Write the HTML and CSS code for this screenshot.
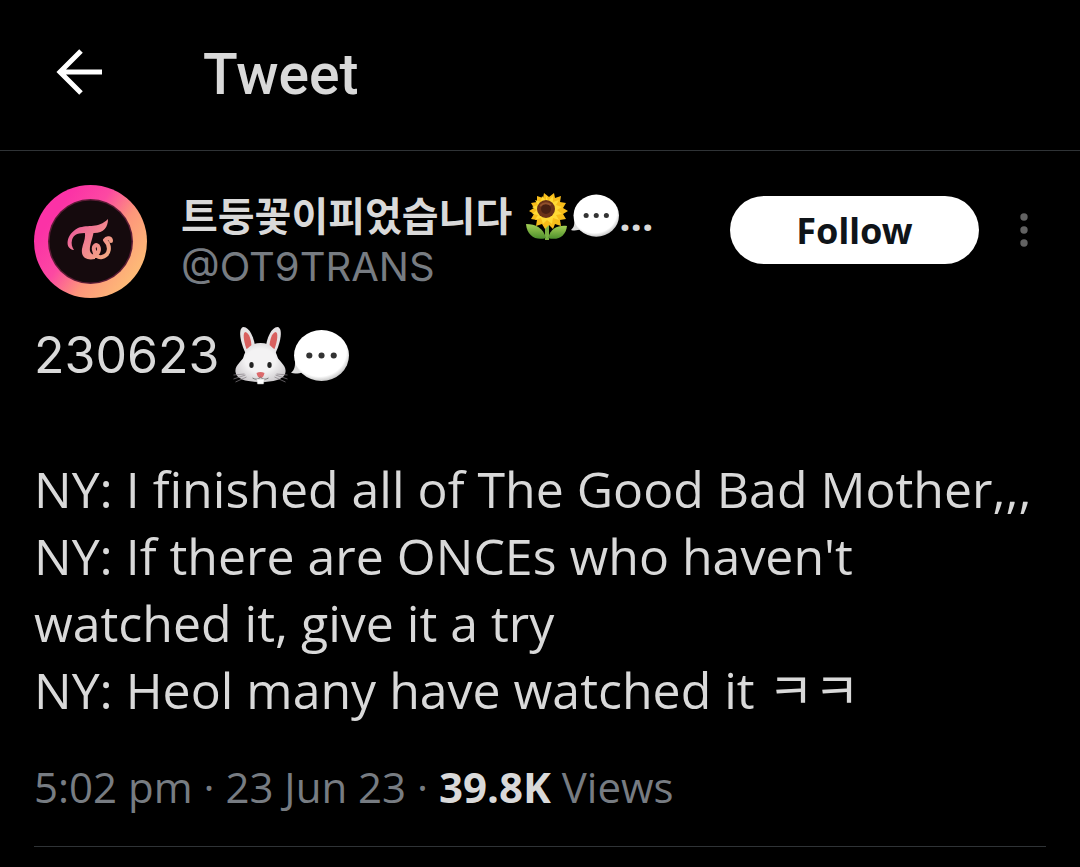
FILE: index.html
```
<!DOCTYPE html>
<html lang="en">
<head>
    <meta charset="UTF-8">
    <meta name="viewport" content="width=device-width, initial-scale=1.0">
    <title>Tweet</title>
    <link rel="stylesheet" href="styles.css">
</head>
<body>
    <!-- Shared emoji drawings -->
    <svg class="sprite" aria-hidden="true">
        <defs>
            <radialGradient id="bubble-fill" cx="0.46" cy="0.42" r="0.57">
                <stop offset="0.86" stop-color="#ffffff"/>
                <stop offset="1" stop-color="#cfcfcf"/>
            </radialGradient>
            <radialGradient id="fur-fill" cx="0.5" cy="0.45" r="0.6">
                <stop offset="0.5" stop-color="#f3f2f3"/>
                <stop offset="1" stop-color="#cbc8cb"/>
            </radialGradient>
            <linearGradient id="leaf-fill" x1="0" y1="0" x2="0" y2="1">
                <stop offset="0" stop-color="#a4cf55"/>
                <stop offset="1" stop-color="#4c8f2c"/>
            </linearGradient>
        </defs>
        <symbol id="bubble" viewBox="0 0 57 57">
            <path d="M0 45c4-3 4-7 4-12l12 13c-5-3-9 1-16-1z" fill="#dedede"/>
            <ellipse cx="30" cy="28" rx="27" ry="25" fill="url(#bubble-fill)"/>
            <circle cx="18" cy="28" r="3" fill="#333"/>
            <circle cx="30" cy="28" r="3" fill="#333"/>
            <circle cx="42" cy="28" r="3" fill="#333"/>
        </symbol>
        <symbol id="rabbit" viewBox="0 0 57 60">
            <path d="M12 27C7 17 4 2 10 1c6 0 11 11 12 22z" fill="#e6e3e5"/>
            <path d="M42 27c5-10 8-25 2-26-6 0-11 11-12 22z" fill="#e6e3e5"/>
            <path d="M13 23C10 15 9 6 12 6c4 1 6 9 6 15z" fill="#d9605f"/>
            <path d="M41 23c3-8 4-17 1-17-4 1-6 9-6 15z" fill="#d9605f"/>
            <path d="M27 17c11 0 15 7 17 14 1 4 9 8 8 15-1 8-13 10-25 10S3 54 2 46c-1-7 7-11 8-15 2-7 6-14 17-14z" fill="url(#fur-fill)"/>
            <ellipse cx="18" cy="39" rx="2.2" ry="3" fill="#222"/>
            <ellipse cx="36" cy="39" rx="2.2" ry="3" fill="#222"/>
            <path d="M0 53l12-4M2 56l11-5M0 49l11-1M54 53l-12-4M52 56l-11-5M54 49l-11-1" stroke="#858085" stroke-width="0.7"/>
            <path d="M23 47q4-2 8 0-1 5-4 5t-4-5z" fill="#dc6a6c"/>
            <path d="M19 52q5 3 8-1 3 4 8 1" fill="none" stroke="#777" stroke-width="1"/>
            <path d="M23 53h8l-1 5h-6z" fill="#fff" stroke="#aaa" stroke-width="0.5"/>
        </symbol>
        <symbol id="sunflower" viewBox="0 0 46 50">
            <path d="M21 34h4v15h-4z" fill="#79b043"/>
            <path d="M22 47C12 50 3 45 2 33c10 0 17 4 20 14z" fill="url(#leaf-fill)"/>
            <path d="M24 47c10 3 18-2 19-12-9-1-16 2-19 12z" fill="url(#leaf-fill)"/>
            <path d="M22 1l3 5 5-4 1 5 6-2-1 6 6 1-3 5 5 3-5 3 3 5-6 1 1 6-6-2-2 5-4-4-4 4-3-5-6 2 1-6-6-1 3-5-5-3 5-3-3-5 6-1V5l6 2 1-5 5 4z" fill="#f7bd1a"/>
            <path d="M22 4l2 6 5-5v6l6-2-3 5 6 2-5 3 5 4-6 1 3 5-6-2-1 6-5-4-4 4-2-6-6 2 3-5-6-1 5-4-5-3 6-2-3-5 6 2 1-6 4 5z" fill="#ffda35"/>
            <circle cx="22" cy="18" r="9" fill="#6a3218"/>
            <circle cx="22" cy="18" r="5" fill="#482012"/>
            <path d="M16 15q5-5 11-1" fill="none" stroke="#91502c" stroke-width="2"/>
        </symbol>
    </svg>

    <header class="top-bar">
        <button class="icon-button" type="button" aria-label="Back">
            <svg class="back-icon" viewBox="0 0 46 46" aria-hidden="true">
                <path d="M46 23H4M25 2L4 23l21 21" fill="none" stroke="#fff" stroke-width="5"/>
            </svg>
        </button>
        <h1>Tweet</h1>
    </header>

    <main class="tweet">
        <div class="author">
            <svg class="avatar" viewBox="0 0 113 113" role="img" aria-label="Profile picture">
                <defs>
                    <linearGradient id="ring" x1="0.1" y1="0.2" x2="0.9" y2="0.75">
                        <stop offset="0.1" stop-color="#fb32a6"/>
                        <stop offset="0.4" stop-color="#fc49a2"/>
                        <stop offset="0.68" stop-color="#fd967b"/>
                        <stop offset="1" stop-color="#fdb877"/>
                    </linearGradient>
                    <linearGradient id="mark" gradientUnits="userSpaceOnUse" x1="36" y1="40" x2="76" y2="74">
                        <stop offset="0" stop-color="#ed589c"/>
                        <stop offset="1" stop-color="#f5b081"/>
                    </linearGradient>
                </defs>
                <circle cx="56.5" cy="56.5" r="56.5" fill="url(#ring)"/>
                <circle cx="56.5" cy="56.5" r="42.5" fill="#5c1c36"/>
                <circle cx="56.5" cy="56.5" r="41" fill="#150a0d"/>
                <!-- Ribbon style monogram -->
                <path d="M40 65C30 64 32 49 44 43c11-4 20 1 30-9 0 8-4 14-14 14-12 0-20-1-22 7-1 4 0 7 2 10z" fill="url(#mark)"/>
                <path d="M50 45h10c-1 8-5 16-4 21 1 3 3 4 5 3v5c-10 2-14-3-13-10 1-6 5-12 2-19z" fill="url(#mark)"/>
                <path d="M59 72c6-3 7-8 5-11-2-2-5 0-4 4 1 5 4 8 8 7 8-2 9-11 3-17 2-3 6-2 6 1" fill="none" stroke="url(#mark)" stroke-width="4" stroke-linecap="round" stroke-linejoin="round"/>
            </svg>
            <div class="names">
                <h2><span>트둥꽃이피었습니다</span><svg class="emoji-small flower" role="img" aria-label="sunflower"><use href="#sunflower"/></svg><svg class="emoji-small" role="img" aria-label="speech balloon"><use href="#bubble"/></svg><span>...</span></h2>
                <a class="handle" href="#">@OT9TRANS</a>
            </div>
            <button class="follow" type="button">Follow</button>
            <button class="icon-button more" type="button" aria-label="More options">
                <svg class="more-icon" viewBox="0 0 8 34" fill="#626262" aria-hidden="true">
                    <circle cx="4" cy="4" r="3.7"/>
                    <circle cx="4" cy="17" r="3.7"/>
                    <circle cx="4" cy="30" r="3.7"/>
                </svg>
            </button>
        </div>

        <div class="tweet-text">
            <p class="date-line">230623 <svg class="emoji" role="img" aria-label="rabbit"><use href="#rabbit"/></svg><svg class="emoji" role="img" aria-label="speech balloon"><use href="#bubble"/></svg></p>
            <p>NY: I finished all of The Good Bad Mother,,,</p>
            <p>NY: If there are ONCEs who haven't<br>watched it, give it a try</p>
            <p>NY: Heol many have watched it ㅋㅋ</p>
        </div>

        <p class="meta">5:02 pm · 23 Jun 23 · <strong>39.8K</strong> Views</p>
    </main>
</body>
</html>
```
FILE: styles.css
```
/* Basic reset */
* {
    margin: 0;
    padding: 0;
    box-sizing: border-box;
}

body {
    background-color: #000;
    color: #d9d9d9;
    font-family: "Open Sans", "Noto Sans CJK KR", sans-serif;
}

.sprite {
    position: absolute;
    width: 0;
    height: 0;
}

/* Title bar */
.top-bar {
    display: flex;
    align-items: center;
    gap: 101px;
    height: 151px;
    padding: 0 56px 6px;
    border-bottom: 1px solid #2f3336;
}

.top-bar h1 {
    padding-top: 6px;
    font-family: Roboto, sans-serif;
    font-size: 57px;
    font-weight: 500;
    line-height: 68px;
}

.icon-button {
    display: flex;
    background: none;
    border: none;
    cursor: pointer;
}

.back-icon {
    width: 46px;
    height: 46px;
}

/* Tweet */
.tweet {
    margin: 0 34px;
    padding-top: 34px;
    border-bottom: 1px solid #2f3336;
}

.author {
    display: flex;
    align-items: flex-start;
}

.avatar {
    flex: none;
    width: 113px;
    height: 113px;
    margin-right: 34px;
}

.names {
    flex: 1;
    min-width: 0;
    padding-top: 6px;
}

.names h2 {
    display: flex;
    font-size: 40px;
    font-weight: 700;
    line-height: 50px;
    white-space: nowrap;
}

.handle {
    display: block;
    color: #777c82;
    font-family: Inter, sans-serif;
    font-size: 40px;
    line-height: 52px;
    text-decoration: none;
}

.emoji-small {
    width: 48px;
    height: 50px;
}

.flower {
    margin-left: 11px;
}

.follow {
    width: 249px;
    height: 68px;
    margin-top: 11px;
    background-color: #fff;
    border: none;
    border-radius: 34px;
    color: #0f1419;
    font-family: "Noto Sans", sans-serif;
    font-size: 36px;
    font-weight: 700;
    cursor: pointer;
}

.more {
    margin: 28px 18px 0 41px;
}

.more-icon {
    width: 8px;
    height: 34px;
}

.tweet-text {
    margin-top: 24px;
    font-size: 50px;
    line-height: 67px;
}

.date-line {
    display: flex;
    align-items: center;
    margin-bottom: 67px;
    font-family: Inter, sans-serif;
    white-space: pre;
}

.emoji {
    width: 58px;
    height: 60px;
}

.meta {
    padding: 34px 0 30px;
    color: #777c82;
    font-size: 42px;
    line-height: 58px;
}

.meta strong {
    color: #d9d9d9;
}
```
